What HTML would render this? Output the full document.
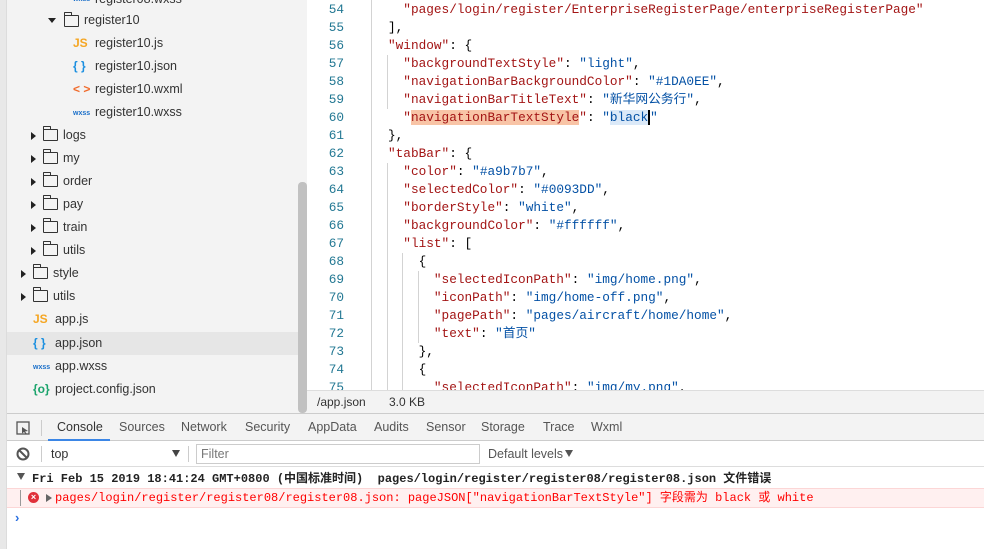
<!DOCTYPE html>
<html><head><meta charset="utf-8"><style>
*{margin:0;padding:0;box-sizing:border-box}
body{width:984px;height:549px;overflow:hidden;background:#fff;font-family:"Liberation Sans","Noto Sans CJK SC",sans-serif;position:relative}
.a{position:absolute}
#side{left:0;top:0;width:307px;height:413px;background:#f3f3f3}
#strip{left:0;top:0;width:7px;height:549px;background:#e8e8e8;border-right:1px solid #dcdcdc}
.row{position:absolute;height:23px;line-height:23px;font-size:12.5px;color:#333;white-space:nowrap}
.tri{position:absolute;width:0;height:0;border-left:5px solid #222;border-top:4px solid transparent;border-bottom:4px solid transparent;top:8px}
.trid{position:absolute;width:0;height:0;border-top:5px solid #222;border-left:4px solid transparent;border-right:4px solid transparent;top:9px}
.fold{position:absolute;top:5px;width:15px;height:12px;border:1.3px solid #333;border-radius:1px}
.fold:before{content:"";position:absolute;left:-1.3px;top:-4px;width:6px;height:3px;border:1.3px solid #333;border-bottom:none;border-radius:1px 1px 0 0}
.ic{position:absolute;font-weight:bold;font-size:12px}
#code{left:307px;top:0;width:677px;height:390px;background:#fff;overflow:hidden;font-family:"Liberation Mono","Noto Sans CJK SC",monospace;font-size:12.75px}
.ln{position:absolute;left:0;width:37px;text-align:right;color:#237893;line-height:18px;height:18px}
.cl{position:absolute;white-space:pre;color:#000;line-height:18px;height:18px;overflow:visible}
.cl span{line-height:18px}
.k{color:#a31515}.s{color:#0451a5}
.g{position:absolute;width:1px;background:#d3d3d3}
#scr{left:298px;top:182px;width:9px;height:231px;background:#c1c1c1;border-radius:4px}
#stat{left:307px;top:390px;width:677px;height:23px;background:#f3f3f3;border-top:1px solid #ddd;font-size:12px;color:#333;line-height:22px}
#tabs{left:7px;top:413px;width:977px;height:28px;background:#f3f3f3;border-top:1px solid #ccc;border-bottom:1px solid #ccc;font-size:12.5px;color:#555}
#tabs span{position:absolute;top:6px}
#tb{left:7px;top:441px;width:977px;height:26px;background:#fff;border-bottom:1px solid #ddd;font-size:12.5px;color:#333}
.m{font-family:"Liberation Mono","Noto Sans CJK SC",monospace;font-size:12px;white-space:pre;line-height:15px}
</style></head><body>
<div class="a" id="side">
<div class="row" style="top:-12px;left:73px"><span class="ic" style="left:0;font-size:7px;color:#1a6fc9">wxss</span><span style="position:absolute;left:22px">register08.wxss</span></div>
<div class="row" style="top:9px;left:0;width:298px"><div class="trid" style="left:48px"></div><div class="fold" style="left:64px;top:6px"></div><span style="position:absolute;left:84px">register10</span></div>
<div class="row" style="top:32px;left:0"><span class="ic" style="left:73px;color:#f5a623">JS</span><span style="position:absolute;left:95px">register10.js</span></div>
<div class="row" style="top:55px;left:0"><span class="ic" style="left:73px;color:#1a8fe0">{ }</span><span style="position:absolute;left:95px">register10.json</span></div>
<div class="row" style="top:78px;left:0"><span class="ic" style="left:73px;color:#f06a2a">&lt; &gt;</span><span style="position:absolute;left:95px">register10.wxml</span></div>
<div class="row" style="top:101px;left:0"><span class="ic" style="left:73px;top:1px;font-size:7px;color:#1a6fc9">wxss</span><span style="position:absolute;left:95px">register10.wxss</span></div>
<div class="row" style="top:124px"><div class="tri" style="left:31px"></div><div class="fold" style="left:43px"></div><span style="position:absolute;left:63px">logs</span></div>
<div class="row" style="top:147px"><div class="tri" style="left:31px"></div><div class="fold" style="left:43px"></div><span style="position:absolute;left:63px">my</span></div>
<div class="row" style="top:170px"><div class="tri" style="left:31px"></div><div class="fold" style="left:43px"></div><span style="position:absolute;left:63px">order</span></div>
<div class="row" style="top:193px"><div class="tri" style="left:31px"></div><div class="fold" style="left:43px"></div><span style="position:absolute;left:63px">pay</span></div>
<div class="row" style="top:216px"><div class="tri" style="left:31px"></div><div class="fold" style="left:43px"></div><span style="position:absolute;left:63px">train</span></div>
<div class="row" style="top:239px"><div class="tri" style="left:31px"></div><div class="fold" style="left:43px"></div><span style="position:absolute;left:63px">utils</span></div>
<div class="row" style="top:262px"><div class="tri" style="left:21px"></div><div class="fold" style="left:33px"></div><span style="position:absolute;left:53px">style</span></div>
<div class="row" style="top:285px"><div class="tri" style="left:21px"></div><div class="fold" style="left:33px"></div><span style="position:absolute;left:53px">utils</span></div>
<div class="row" style="top:308px"><span class="ic" style="left:33px;color:#f5a623">JS</span><span style="position:absolute;left:55px">app.js</span></div>
<div class="row" style="top:332px;left:7px;width:291px;background:#e6e6e6"><span class="ic" style="left:26px;color:#1a8fe0">{ }</span><span style="position:absolute;left:48px">app.json</span></div>
<div class="row" style="top:355px"><span class="ic" style="left:33px;top:1px;font-size:7px;color:#1a6fc9">wxss</span><span style="position:absolute;left:55px">app.wxss</span></div>
<div class="row" style="top:378px"><span class="ic" style="left:33px;color:#1aa36b">{o}</span><span style="position:absolute;left:55px">project.config.json</span></div>
</div>
<div class="a" id="scr"></div>
<div class="a" id="strip"></div>
<div class="a" id="code">
<div class="g" style="left:64px;top:0;height:390px"></div>
<div class="g" style="left:80px;top:55px;height:54px"></div>
<div class="g" style="left:80px;top:163px;height:227px"></div>
<div class="g" style="left:95px;top:253px;height:137px"></div>
<div class="g" style="left:111px;top:271px;height:72px"></div>
<div id="lines"></div>
</div>
<div class="a" id="stat"><span style="position:absolute;left:10px">/app.json</span><span style="position:absolute;left:82px">3.0 KB</span></div>
<div class="a" id="tabs">
<svg style="position:absolute;left:9px;top:7px" width="14" height="14"><rect x="1" y="1" width="12" height="12" fill="none" stroke="#555" stroke-width="1.3"/><path d="M6 6 L12 10 L9 10.5 L11 13 L10 13.5 L8 11 L6 12.5Z" fill="#555"/></svg>
<div style="position:absolute;left:34px;top:6px;width:1px;height:16px;background:#ccc"></div>
<span style="left:50px;color:#333">Console</span>
<div style="position:absolute;left:41px;top:25px;width:62px;height:2px;background:#3b86e6"></div>
<span style="left:112px">Sources</span><span style="left:174px">Network</span><span style="left:238px">Security</span><span style="left:301px">AppData</span><span style="left:367px">Audits</span><span style="left:419px">Sensor</span><span style="left:474px">Storage</span><span style="left:536px">Trace</span><span style="left:584px">Wxml</span>
</div>
<div class="a" id="tb">
<svg style="position:absolute;left:9px;top:6px" width="14" height="14"><circle cx="7" cy="7" r="5.5" fill="none" stroke="#555" stroke-width="2"/><path d="M3 3 L11 11" stroke="#555" stroke-width="2"/></svg>
<div style="position:absolute;left:34px;top:5px;width:1px;height:16px;background:#ccc"></div>
<span style="position:absolute;left:44px;top:6px">top</span>
<div style="position:absolute;left:165px;top:9px;border-top:7px solid #444;border-left:4px solid transparent;border-right:4px solid transparent"></div>
<div style="position:absolute;left:181px;top:5px;width:1px;height:16px;background:#ccc"></div>
<div style="position:absolute;left:189px;top:3px;width:284px;height:20px;border:1px solid #ccc;color:#777;padding:2px 4px">Filter</div>
<span style="position:absolute;left:481px;top:6px;color:#555">Default levels</span>
<div style="position:absolute;left:558px;top:9px;border-top:7px solid #555;border-left:4px solid transparent;border-right:4px solid transparent"></div>
</div>
<div class="a" style="left:17px;top:473px;border-top:7px solid #555;border-left:4px solid transparent;border-right:4px solid transparent"></div>
<div class="a m" style="left:32px;top:472px;color:#222;font-weight:bold">Fri Feb 15 2019 18:41:24 GMT+0800 (中国标准时间)  pages/login/register/register08/register08.json 文件错误</div>
<div class="a" style="left:7px;top:488px;width:977px;height:20px;background:#fff0f0;border-top:1px solid #fcd6d6;border-bottom:1px solid #fcd6d6"></div>
<div class="a" style="left:20px;top:490px;width:1px;height:16px;background:#999"></div>
<div class="a" style="left:28px;top:492px;width:11px;height:11px;border-radius:50%;background:#e0303a;color:#fff;font-size:9px;line-height:11px;text-align:center;font-weight:bold">×</div>
<div class="a" style="left:46px;top:494px;border-left:6px solid #666;border-top:4px solid transparent;border-bottom:4px solid transparent"></div>
<div class="a m" style="left:55px;top:491px;color:#f00">pages/login/register/register08/register08.json: pageJSON["navigationBarTextStyle"] 字段需为 black 或 white</div>
<div class="a" style="left:15px;top:510px;color:#2a6fe0;font-size:13px;font-weight:bold">›</div>
<script>
var L=[
[54,2,'<span class="k">"pages/login/register/EnterpriseRegisterPage/enterpriseRegisterPage"</span>'],
[55,1,'],'],
[56,1,'<span class="k">"window"</span>: {'],
[57,2,'<span class="k">"backgroundTextStyle"</span>: <span class="s">"light"</span>,'],
[58,2,'<span class="k">"navigationBarBackgroundColor"</span>: <span class="s">"#1DA0EE"</span>,'],
[59,2,'<span class="k">"navigationBarTitleText"</span>: <span class="s">"新华网公务行"</span>,'],
[60,2,'<span class="k">"<span style="background:#f8c4a6">navigationBarTextStyle</span>"</span>: <span class="s">"<span style="background:#dbe9f8">black</span><span style="border-left:2px solid #000"></span>"</span>'],
[61,1,'},'],
[62,1,'<span class="k">"tabBar"</span>: {'],
[63,2,'<span class="k">"color"</span>: <span class="s">"#a9b7b7"</span>,'],
[64,2,'<span class="k">"selectedColor"</span>: <span class="s">"#0093DD"</span>,'],
[65,2,'<span class="k">"borderStyle"</span>: <span class="s">"white"</span>,'],
[66,2,'<span class="k">"backgroundColor"</span>: <span class="s">"#ffffff"</span>,'],
[67,2,'<span class="k">"list"</span>: ['],
[68,3,'{'],
[69,4,'<span class="k">"selectedIconPath"</span>: <span class="s">"img/home.png"</span>,'],
[70,4,'<span class="k">"iconPath"</span>: <span class="s">"img/home-off.png"</span>,'],
[71,4,'<span class="k">"pagePath"</span>: <span class="s">"pages/aircraft/home/home"</span>,'],
[72,4,'<span class="k">"text"</span>: <span class="s">"首页"</span>'],
[73,3,'},'],
[74,3,'{'],
[75,4,'<span class="k">"selectedIconPath"</span>: <span class="s">"img/my.png"</span>,']];
var h='';L.forEach(function(r,i){var t=i*18+1;h+='<div class="ln" style="top:'+t+'px">'+r[0]+'</div><div class="cl" style="top:'+t+'px;left:'+(81+(r[1]-1)*15.3)+'px">'+r[2]+'</div>';});
document.getElementById('lines').innerHTML=h;
</script>
</body></html>
